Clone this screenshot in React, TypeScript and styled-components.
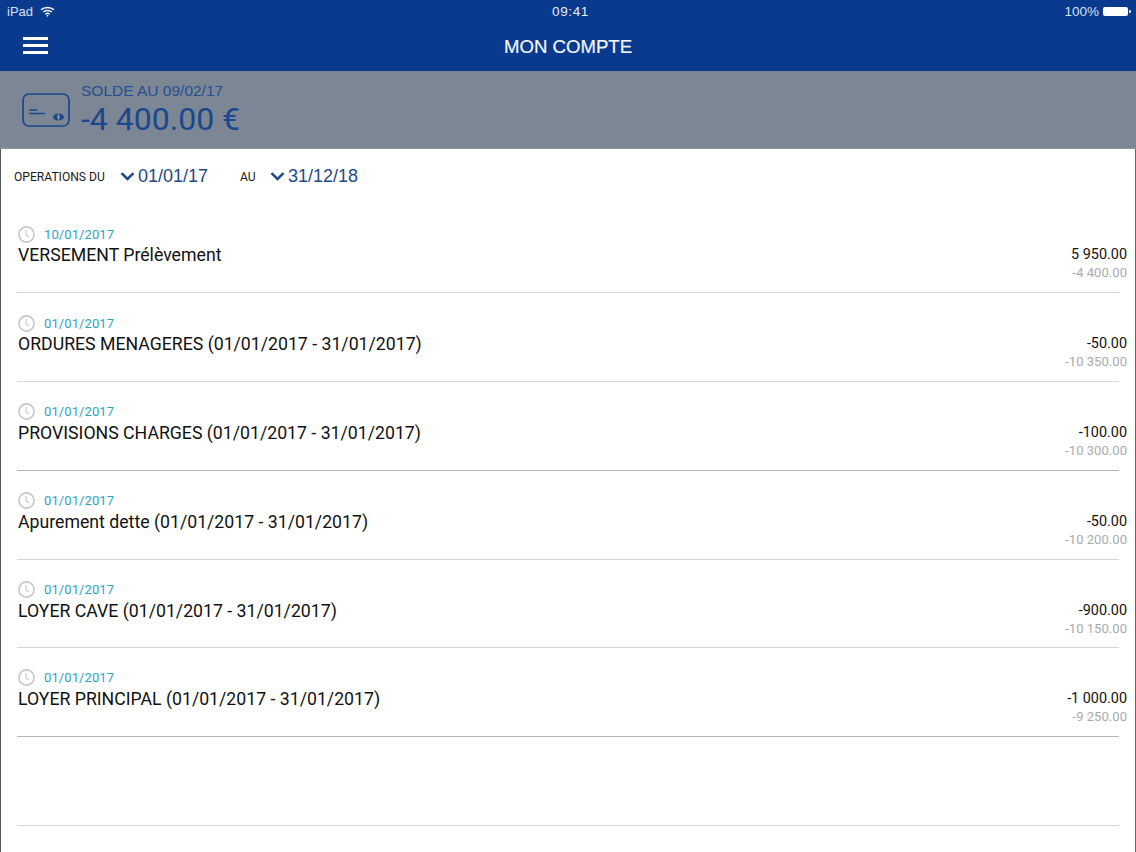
import React from "react";
import styled, { createGlobalStyle } from "styled-components";

const Global = createGlobalStyle`
  html, body { margin: 0; padding: 0; background: #fff; }
  #root { width: 1136px; height: 852px; overflow: hidden; }
`;
const Page = styled.div`
  width: 1136px; height: 852px; box-sizing: border-box; display: flex; flex-direction: column;
  font-family: Roboto, "Liberation Sans", sans-serif; background: #fff; overflow: hidden;
`;
const TopBar = styled.header`
  height: 71px; background: #0a3a8e; color: #fff; display: flex; flex-direction: column; flex: none;
`;
const StatusBar = styled.div`
  height: 23px; display: grid; grid-template-columns: 1fr auto 1fr; align-items: center; padding: 0 6px 0 7px;
  font-family: "Liberation Sans", sans-serif; font-size: 13px; color: #d5e0f2;
`;
const StatusLeft = styled.div` display: flex; align-items: center; gap: 7px; `;
const StatusTime = styled.div` font-size: 13.5px; letter-spacing: .6px; color: #e8eef8; margin-left: 4px; `;
const StatusRight = styled.div` display: flex; align-items: center; justify-content: flex-end; gap: 4px; font-size: 13.5px; `;
const Battery = styled.div`
  width: 25px; height: 9px; background: #fff; border-radius: 2px; position: relative; margin-right: 2px;
  &::after { content: ""; position: absolute; right: -3px; top: 3px; width: 2px; height: 3px; background: #dbe5f5; border-radius: 0 1px 1px 0; }
`;
const NavRow = styled.div`
  height: 48px; display: grid; grid-template-columns: 1fr auto 1fr; align-items: center; padding: 0 23px;
`;
const Burger = styled.div`
  width: 25px; height: 17px; display: flex; flex-direction: column; justify-content: space-between; margin-top: -4px;
  span { display: block; height: 3px; background: #fff; }
`;
const NavTitle = styled.div`
  font-family: "Liberation Sans", sans-serif; font-size: 18.6px; color: #f2f6fc; margin-top: -1px;
  -webkit-text-stroke: .2px #f2f6fc;
`;
const Banner = styled.section`
  height: 78px; flex: none; background: #7c8694; box-shadow: inset 0 -1px 0 #8e97a2; display: flex; align-items: center;
  padding: 0 0 0 22px; gap: 11px; color: #123f8c;
`;
const BannerText = styled.div` display: flex; flex-direction: column; margin-top: -2px; `;
const BannerLabel = styled.div`
  font-family: "Liberation Sans", sans-serif; font-size: 15.5px; line-height: 19px; color: #24508f;
`;
const BannerAmount = styled.div`
  font-family: Roboto, sans-serif; font-size: 32px; line-height: 38px; color: #1a478e;
`;
const Content = styled.main`
  flex: 1; min-height: 0; border-left: 1px solid #555; border-right: 1px solid #666; box-sizing: border-box;
  display: flex; flex-direction: column;
`;
const FilterRow = styled.div`
  height: 55px; flex: none; display: flex; align-items: center; padding-left: 13px;
`;
const FilterLabel = styled.span<{ $w: number }>`
  font-size: 12.1px; color: #1a1a1a; width: ${(p) => p.$w}px;
`;
const DateValue = styled.span<{ $w: number }>`
  display: flex; align-items: center; gap: 3px; width: ${(p) => p.$w}px;
  font-family: "Liberation Sans", sans-serif; font-size: 18px; color: #1f4a85;
`;
const List = styled.div` display: flex; flex-direction: column; `;
const Row = styled.article<{ $h: number; $dark?: boolean }>`
  height: ${(p) => p.$h}px; box-sizing: border-box; margin: 0 16px; display: flex; justify-content: space-between;
  padding: 21px 0 0 1px; border-bottom: 1px solid ${(p) => (p.$dark ? "#b4b8b8" : "#d4d6d6")};
`;
const RowLeft = styled.div` display: flex; flex-direction: column; `;
const DateLine = styled.div<{ $up?: boolean }>`
  display: flex; align-items: center; gap: 9px; height: 18px;
  margin: ${(p) => (p.$up ? "-1px 0 2px" : "0 0 1px")};
  font-size: 13px; letter-spacing: .1px; color: #2da3c6;
`;
const Label = styled.div` font-size: 17.7px; line-height: 22px; color: #111; `;
const RowRight = styled.div`
  display: flex; flex-direction: column; align-items: flex-end; margin-right: -8px; padding-top: 21px;
`;
const Amount = styled.div` font-size: 14.4px; line-height: 18px; color: #111; `;
const Balance = styled.div` font-size: 13.1px; line-height: 18px; color: #a9abad; `;

const Wifi = () => (
  <svg width="15" height="11" viewBox="0 0 15 11" fill="none" stroke="#fff" strokeWidth="1.5">
    <path d="M1 3.8C4.6.6 10.4.6 14 3.8" />
    <path d="M3.2 6C5.6 4 9.4 4 11.8 6" />
    <path d="M5.4 8.1c1.2-.9 3-.9 4.2 0" />
    <circle cx="7.5" cy="9.7" r=".9" fill="#fff" stroke="none" />
  </svg>
);
const CardIcon = () => (
  <svg width="48" height="34" viewBox="0 0 48 34" fill="none" stroke="#1a478e" strokeWidth="1.7">
    <rect x="1" y="1" width="46" height="32" rx="6" />
    <path d="M7 17h8M7 20.5h16" strokeWidth="1.3" />
    <ellipse cx="36.5" cy="24" rx="5.5" ry="3.6" fill="#1a478e" stroke="none" />
    <ellipse cx="36.5" cy="24" rx="1.1" ry="3" fill="#8f9aa8" stroke="none" />
  </svg>
);
const Chevron = () => (
  <svg width="15" height="9" viewBox="0 0 15 9" fill="none" stroke="#1f4a85" strokeWidth="2.5">
    <path d="M1.5 1.2L7.5 7l6-5.8" />
  </svg>
);
const Clock = () => (
  <svg width="17" height="17" viewBox="0 0 17 17" fill="none" stroke="#c6c8ca" strokeWidth="1.6">
    <circle cx="8.5" cy="8.5" r="7.6" />
    <path d="M8 4v4.8l3 2.2" strokeWidth="1.2" />
  </svg>
);

const rows = [
  { date: "10/01/2017", label: "VERSEMENT Prélèvement", amount: "5 950.00", balance: "-4 400.00", h: 89 },
  { date: "01/01/2017", label: "ORDURES MENAGERES (01/01/2017 - 31/01/2017)", amount: "-50.00", balance: "-10 350.00", h: 89 },
  { date: "01/01/2017", label: "PROVISIONS CHARGES (01/01/2017 - 31/01/2017)", amount: "-100.00", balance: "-10 300.00", h: 89, dark: true, up: true },
  { date: "01/01/2017", label: "Apurement dette (01/01/2017 - 31/01/2017)", amount: "-50.00", balance: "-10 200.00", h: 89, up: true },
  { date: "01/01/2017", label: "LOYER CAVE (01/01/2017 - 31/01/2017)", amount: "-900.00", balance: "-10 150.00", h: 88, up: true },
  { date: "01/01/2017", label: "LOYER PRINCIPAL (01/01/2017 - 31/01/2017)", amount: "-1 000.00", balance: "-9 250.00", h: 89, dark: true, up: true },
];

export default function App() {
  return (
    <Page>
      <Global />
      <TopBar>
        <StatusBar>
          <StatusLeft>iPad <Wifi /></StatusLeft>
          <StatusTime>09:41</StatusTime>
          <StatusRight>100% <Battery /></StatusRight>
        </StatusBar>
        <NavRow>
          <Burger><span /><span /><span /></Burger>
          <NavTitle>MON COMPTE</NavTitle>
        </NavRow>
      </TopBar>
      <Banner>
        <CardIcon />
        <BannerText>
          <BannerLabel>SOLDE AU 09/02/17</BannerLabel>
          <BannerAmount>-4 400.00 €</BannerAmount>
        </BannerText>
      </Banner>
      <Content>
        <FilterRow>
          <FilterLabel $w={106}>OPERATIONS DU</FilterLabel>
          <DateValue $w={120}><Chevron />01/01/17</DateValue>
          <FilterLabel $w={30}>AU</FilterLabel>
          <DateValue $w={110}><Chevron />31/12/18</DateValue>
        </FilterRow>
        <List>
          {rows.map((r) => (
            <Row key={r.label} $h={r.h} $dark={r.dark}>
              <RowLeft>
                <DateLine $up={r.up}><Clock />{r.date}</DateLine>
                <Label>{r.label}</Label>
              </RowLeft>
              <RowRight>
                <Amount>{r.amount}</Amount>
                <Balance>{r.balance}</Balance>
              </RowRight>
            </Row>
          ))}
          <Row $h={89} />
        </List>
      </Content>
    </Page>
  );
}
